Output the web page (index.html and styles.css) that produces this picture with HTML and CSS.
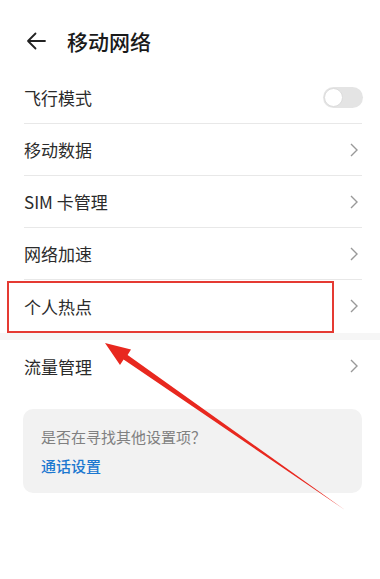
FILE: index.html
```html
<!DOCTYPE html>
<html lang="zh-CN">
<head>
    <meta charset="UTF-8">
    <meta name="viewport" content="width=device-width, initial-scale=1.0">
    <title>移动网络</title>
    <link rel="stylesheet" href="styles.css">
</head>
<body>
    <div class="page">
        <div class="header">
            <svg class="back" width="20" height="18" viewBox="0 0 20 18">
                <path d="M19 9H2M9.5 1.5L2 9l7.5 7.5" fill="none" stroke="#222" stroke-width="1.8" stroke-linecap="round" stroke-linejoin="round"/>
            </svg>
            <h1>移动网络</h1>
        </div>

        <div class="list">
            <div class="row">
                <span>飞行模式</span>
                <span class="switch"><span class="knob"></span></span>
            </div>
            <div class="row">
                <span>移动数据</span>
                <svg class="chev" width="8" height="14" viewBox="0 0 8 14"><polyline points="1,1 7,7 1,13" fill="none" stroke="#999" stroke-width="1.4"/></svg>
            </div>
            <div class="row">
                <span>SIM 卡管理</span>
                <svg class="chev" width="8" height="14" viewBox="0 0 8 14"><polyline points="1,1 7,7 1,13" fill="none" stroke="#999" stroke-width="1.4"/></svg>
            </div>
            <div class="row">
                <span>网络加速</span>
                <svg class="chev" width="8" height="14" viewBox="0 0 8 14"><polyline points="1,1 7,7 1,13" fill="none" stroke="#999" stroke-width="1.4"/></svg>
            </div>
            <div class="row last">
                <span>个人热点</span>
                <svg class="chev" width="8" height="14" viewBox="0 0 8 14"><polyline points="1,1 7,7 1,13" fill="none" stroke="#999" stroke-width="1.4"/></svg>
                <div class="mark"></div>
            </div>
        </div>

        <div class="band"></div>

        <div class="list">
            <div class="row last">
                <span>流量管理</span>
                <svg class="chev" width="8" height="14" viewBox="0 0 8 14"><polyline points="1,1 7,7 1,13" fill="none" stroke="#999" stroke-width="1.4"/></svg>
            </div>
        </div>

        <div class="card">
            <p class="hint">是否在寻找其他设置项？</p>
            <a class="link">通话设置</a>
        </div>

        <!-- annotation arrow drawn over the page -->
        <svg class="arrow" width="380" height="579" viewBox="0 0 380 579">
            <polygon points="105,343 131,349.5 127.6,355 345,510 123.6,359.6 120,365" fill="#e8281f"/>
        </svg>
    </div>
</body>
</html>
```

FILE: styles.css
```css
body {
    margin: 0;
    background: #fff;
    font-family: "Noto Sans CJK SC", "Noto Sans", sans-serif;
    color: #2b2b2b;
}
.page {
    position: relative;
    width: 380px;
    height: 579px;
    overflow: hidden;
}
.header {
    display: flex;
    align-items: center;
    height: 62px;
    padding: 10px 0 0 26px;
}
.back {
    margin-right: 21px;
}
.header h1 {
    margin: 0;
    font-size: 21px;
    font-weight: 500;
    color: #1a1a1a;
}
.list {
    margin: 0 18px 0 24px;
}
.row {
    position: relative;
    display: flex;
    align-items: center;
    justify-content: space-between;
    height: 51px;
    border-bottom: 1px solid #e8e8e8;
    font-size: 17px;
    padding-right: 4px;
}
.row.last {
    border-bottom: none;
    height: 52px;
}
.switch {
    display: flex;
    align-items: center;
    width: 40px;
    height: 21px;
    margin-right: -5px;
    border-radius: 11px;
    background: #e4e4e4;
    box-sizing: border-box;
    padding: 1px;
}
.knob {
    width: 19px;
    height: 19px;
    border-radius: 50%;
    background: #fff;
    box-sizing: border-box;
    border: 1px solid #dcdcdc;
}
.mark {
    position: absolute;
    left: -17px;
    top: 1px;
    width: 327px;
    height: 52px;
    box-sizing: border-box;
    border: 2px solid #e53a33;
}
.band {
    height: 7px;
    margin-top: 1px;
    background: #f6f6f6;
}
.card {
    margin: 17px 18px 0 23px;
    padding: 18px 18px 17px;
    background: #f2f2f2;
    border-radius: 10px;
}
.hint {
    margin: 0 0 9px;
    font-size: 15px;
    line-height: 20px;
    color: #808080;
}
.link {
    display: block;
    font-size: 15px;
    line-height: 20px;
    font-weight: 500;
    color: #1c78d0;
}
.arrow {
    position: absolute;
    left: 0;
    top: 0;
    pointer-events: none;
}
```
